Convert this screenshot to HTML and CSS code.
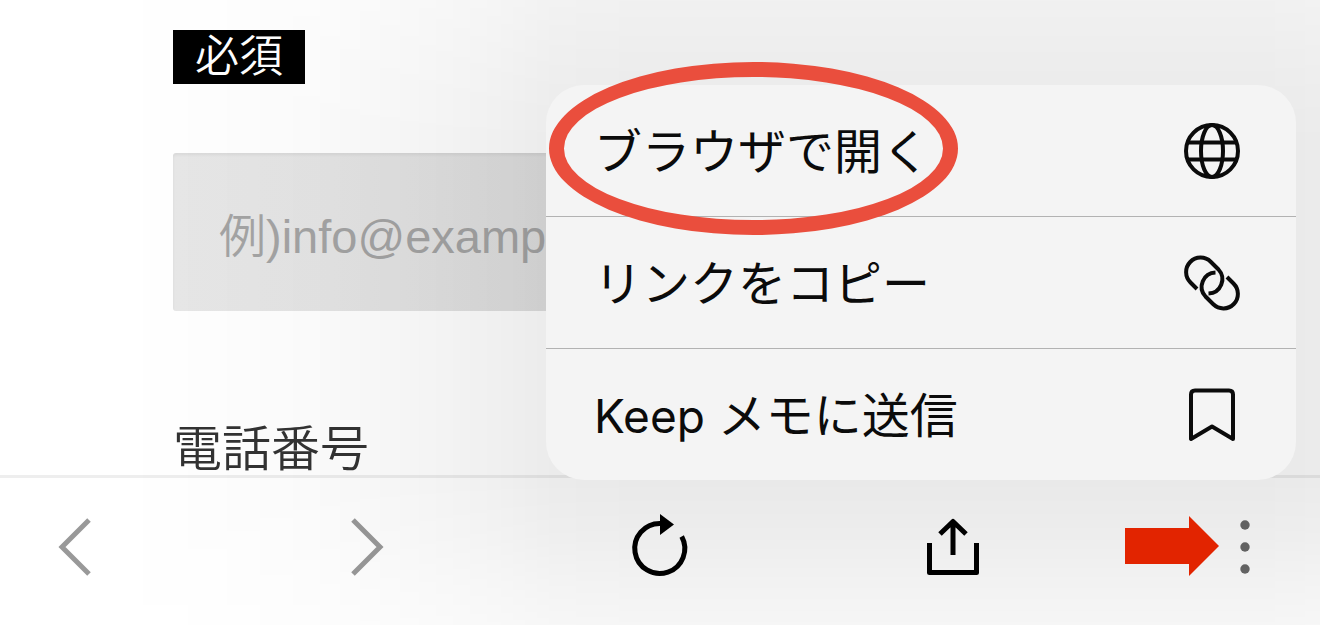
FILE: index.html
```html
<!DOCTYPE html>
<html lang="ja">
<head>
<meta charset="utf-8">
<meta name="viewport" content="width=device-width, initial-scale=1">
<title>ブラウザで開く</title>
<link rel="stylesheet" href="styles.css">
</head>
<body>
<div class="screen">
  <main class="form">
    <label class="badge" for="email">必須</label>
    <input class="field" id="email" type="email" placeholder="例)info@example.com">
    <h2 class="label">電話番号</h2>
  </main>

  <nav class="toolbar">
    <button class="tool muted" type="button" aria-label="戻る">
      <svg viewBox="0 0 64 64"><path d="M46 5 19 32 46 59"/></svg>
    </button>
    <button class="tool muted" type="button" aria-label="進む">
      <svg viewBox="0 0 64 64"><path d="M17 5 44 32 17 59"/></svg>
    </button>
    <button class="tool" type="button" aria-label="再読み込み">
      <svg viewBox="0 0 64 64"><path d="M32 8.500A25 25 0 1 0 53.700 21.500"/><path class="solid" d="M32-1 46 9.500 32 20z"/></svg>
    </button>
    <button class="tool" type="button" aria-label="共有">
      <svg viewBox="0 0 64 64"><path stroke-linejoin="round" d="M8.500 28v29.500h47V28M32 40V7M19 19 32 6.500 45 19"/></svg>
    </button>
    <button class="tool" type="button" aria-label="メニュー">
      <svg viewBox="0 0 64 64"><g class="dots"><circle cx="32" cy="10" r="4.700"/><circle cx="32" cy="32" r="4.700"/><circle cx="32" cy="54" r="4.700"/></g></svg>
    </button>
    <svg class="arrow" viewBox="0 0 94 60" aria-hidden="true"><path d="M0 12h64V0l30 30-30 30V48H0z"/></svg>
  </nav>

  <div class="shade"></div>

  <div class="menu">
    <button class="item" type="button">
      <span class="text">ブラウザで開く</span>
      <svg viewBox="0 0 56 56"><circle cx="28" cy="28" r="26"/><ellipse cx="28" cy="28" rx="11" ry="26"/><path d="M4 19.500h48M4 36.500h48"/></svg>
    </button>
    <button class="item" type="button">
      <span class="text">リンクをコピー</span>
      <svg viewBox="0 0 56 56"><path d="M13 34 6.500 27.500A14.300 14.300 0 0 1 26.700 6.700L34.500 14.500A14.300 14.300 0 0 1 24.500 38.500M43 22 49.500 28.500A14.300 14.300 0 0 1 29.300 49.300L21.500 41.500A14.300 14.300 0 0 1 31.500 17.500"/></svg>
    </button>
    <button class="item" type="button">
      <span class="text"><span class="latin">Keep </span>メモに送信</span>
      <svg viewBox="0 0 56 56"><path stroke-linejoin="round" d="M7 52V7.500Q7 3.500 11 3.500H45Q49 3.500 49 7.500V52L28 39.500z"/></svg>
    </button>
    <div class="ring"></div>
  </div>
</div>
</body>
</html>
```
FILE: styles.css
```css
* {
  box-sizing: border-box;
}

body {
  margin: 0;
  background: #fff;
  font-family: "Noto Sans CJK JP", sans-serif;
}

button {
  border: 0;
  background: none;
  font: inherit;
  color: inherit;
}

.screen {
  position: relative;
  display: flex;
  flex-direction: column;
  min-height: 100vh;
  overflow: hidden;
}

.form {
  flex: 1;
  display: flex;
  flex-direction: column;
  align-items: flex-start;
  padding: 30px 173px 0;
  font-family: "Liberation Sans", "Noto Sans CJK JP", sans-serif;
  font-weight: 350;
}

.badge {
  padding: 0 22px;
  background: #000;
  color: #fff;
  font-size: 44px;
  line-height: 54px;
}

.field {
  width: 100%;
  height: 158px;
  margin-top: 69px;
  padding: 8px 46px 0;
  border: 0;
  border-radius: 3px;
  background: linear-gradient(90deg, #e7e7e7 0, #e5e5e5 160px, #dfdfdf 375px);
  box-shadow: inset 0 2px 3px rgba(0, 0, 0, 0.06);
  font: inherit;
  font-size: 47px;
}

.field::placeholder {
  color: #a4a4a4;
  opacity: 1;
}

.label {
  margin: 112px 0 0;
  color: #333;
  font-size: 49px;
  font-weight: 350;
  line-height: 52px;
}

.toolbar {
  position: relative;
  display: flex;
  justify-content: space-between;
  height: 150px;
  padding: 37px 43px 0;
  border-top: 3px solid #eee;
}

.tool {
  width: 64px;
  height: 64px;
  padding: 0;
}

.tool svg {
  display: block;
  width: 64px;
  height: 64px;
  overflow: visible;
  fill: none;
  stroke: #000;
  stroke-width: 5;
}

.muted svg {
  stroke: #999;
}

.tool .solid {
  fill: #000;
  stroke: none;
}

.tool .dots {
  fill: #696969;
  stroke: none;
}

.arrow {
  position: absolute;
  z-index: 1;
  top: 38px;
  right: 101px;
  width: 94px;
  height: 60px;
  fill: #e22400;
}

/* Soft shade that the open menu throws over the page and toolbar */
.shade {
  position: absolute;
  inset: 0;
  pointer-events: none;
  background: linear-gradient(
    90deg,
    rgba(0, 0, 0, 0) calc(100% - 1200px),
    rgba(0, 0, 0, 0.006) calc(100% - 1110px),
    rgba(0, 0, 0, 0.018) calc(100% - 1010px),
    rgba(0, 0, 0, 0.038) calc(100% - 910px),
    rgba(0, 0, 0, 0.06) calc(100% - 825px),
    rgba(0, 0, 0, 0.078) calc(100% - 765px),
    rgba(0, 0, 0, 0.086) calc(100% - 680px),
    rgba(0, 0, 0, 0.086) calc(100% - 60px),
    rgba(0, 0, 0, 0.08) 100%
  );
  mask-image: linear-gradient(
    0deg,
    rgba(0, 0, 0, 0.42) 0,
    rgba(0, 0, 0, 0.6) 45px,
    rgba(0, 0, 0, 0.82) 90px,
    #000 145px,
    #000 480px,
    rgba(0, 0, 0, 0.88) 540px,
    rgba(0, 0, 0, 0.66) 625px
  );
}

.menu {
  position: absolute;
  right: 24px;
  bottom: 145px;
  width: 750px;
  border-radius: 38px;
  background: #f4f4f4;
}

.item {
  display: flex;
  align-items: center;
  justify-content: space-between;
  width: 100%;
  height: 132px;
  padding: 0 56px 0 48px;
  color: #0b0b0b;
  font-size: 48px;
  text-align: left;
}

.item + .item {
  border-top: 1px solid #b2b2b2;
}

.item:first-child {
  height: 131px;
}

.text {
  padding-bottom: 6px;
}

.latin {
  font-family: Inter, sans-serif;
  font-size: 46px;
}

.item svg {
  width: 56px;
  height: 56px;
  fill: none;
  stroke: #0b0b0b;
  stroke-width: 4;
}

.ring {
  position: absolute;
  top: -23px;
  left: 3px;
  width: 409px;
  height: 173px;
  border: 15px solid #ea4e3d;
  border-radius: 50%;
  pointer-events: none;
}
```
